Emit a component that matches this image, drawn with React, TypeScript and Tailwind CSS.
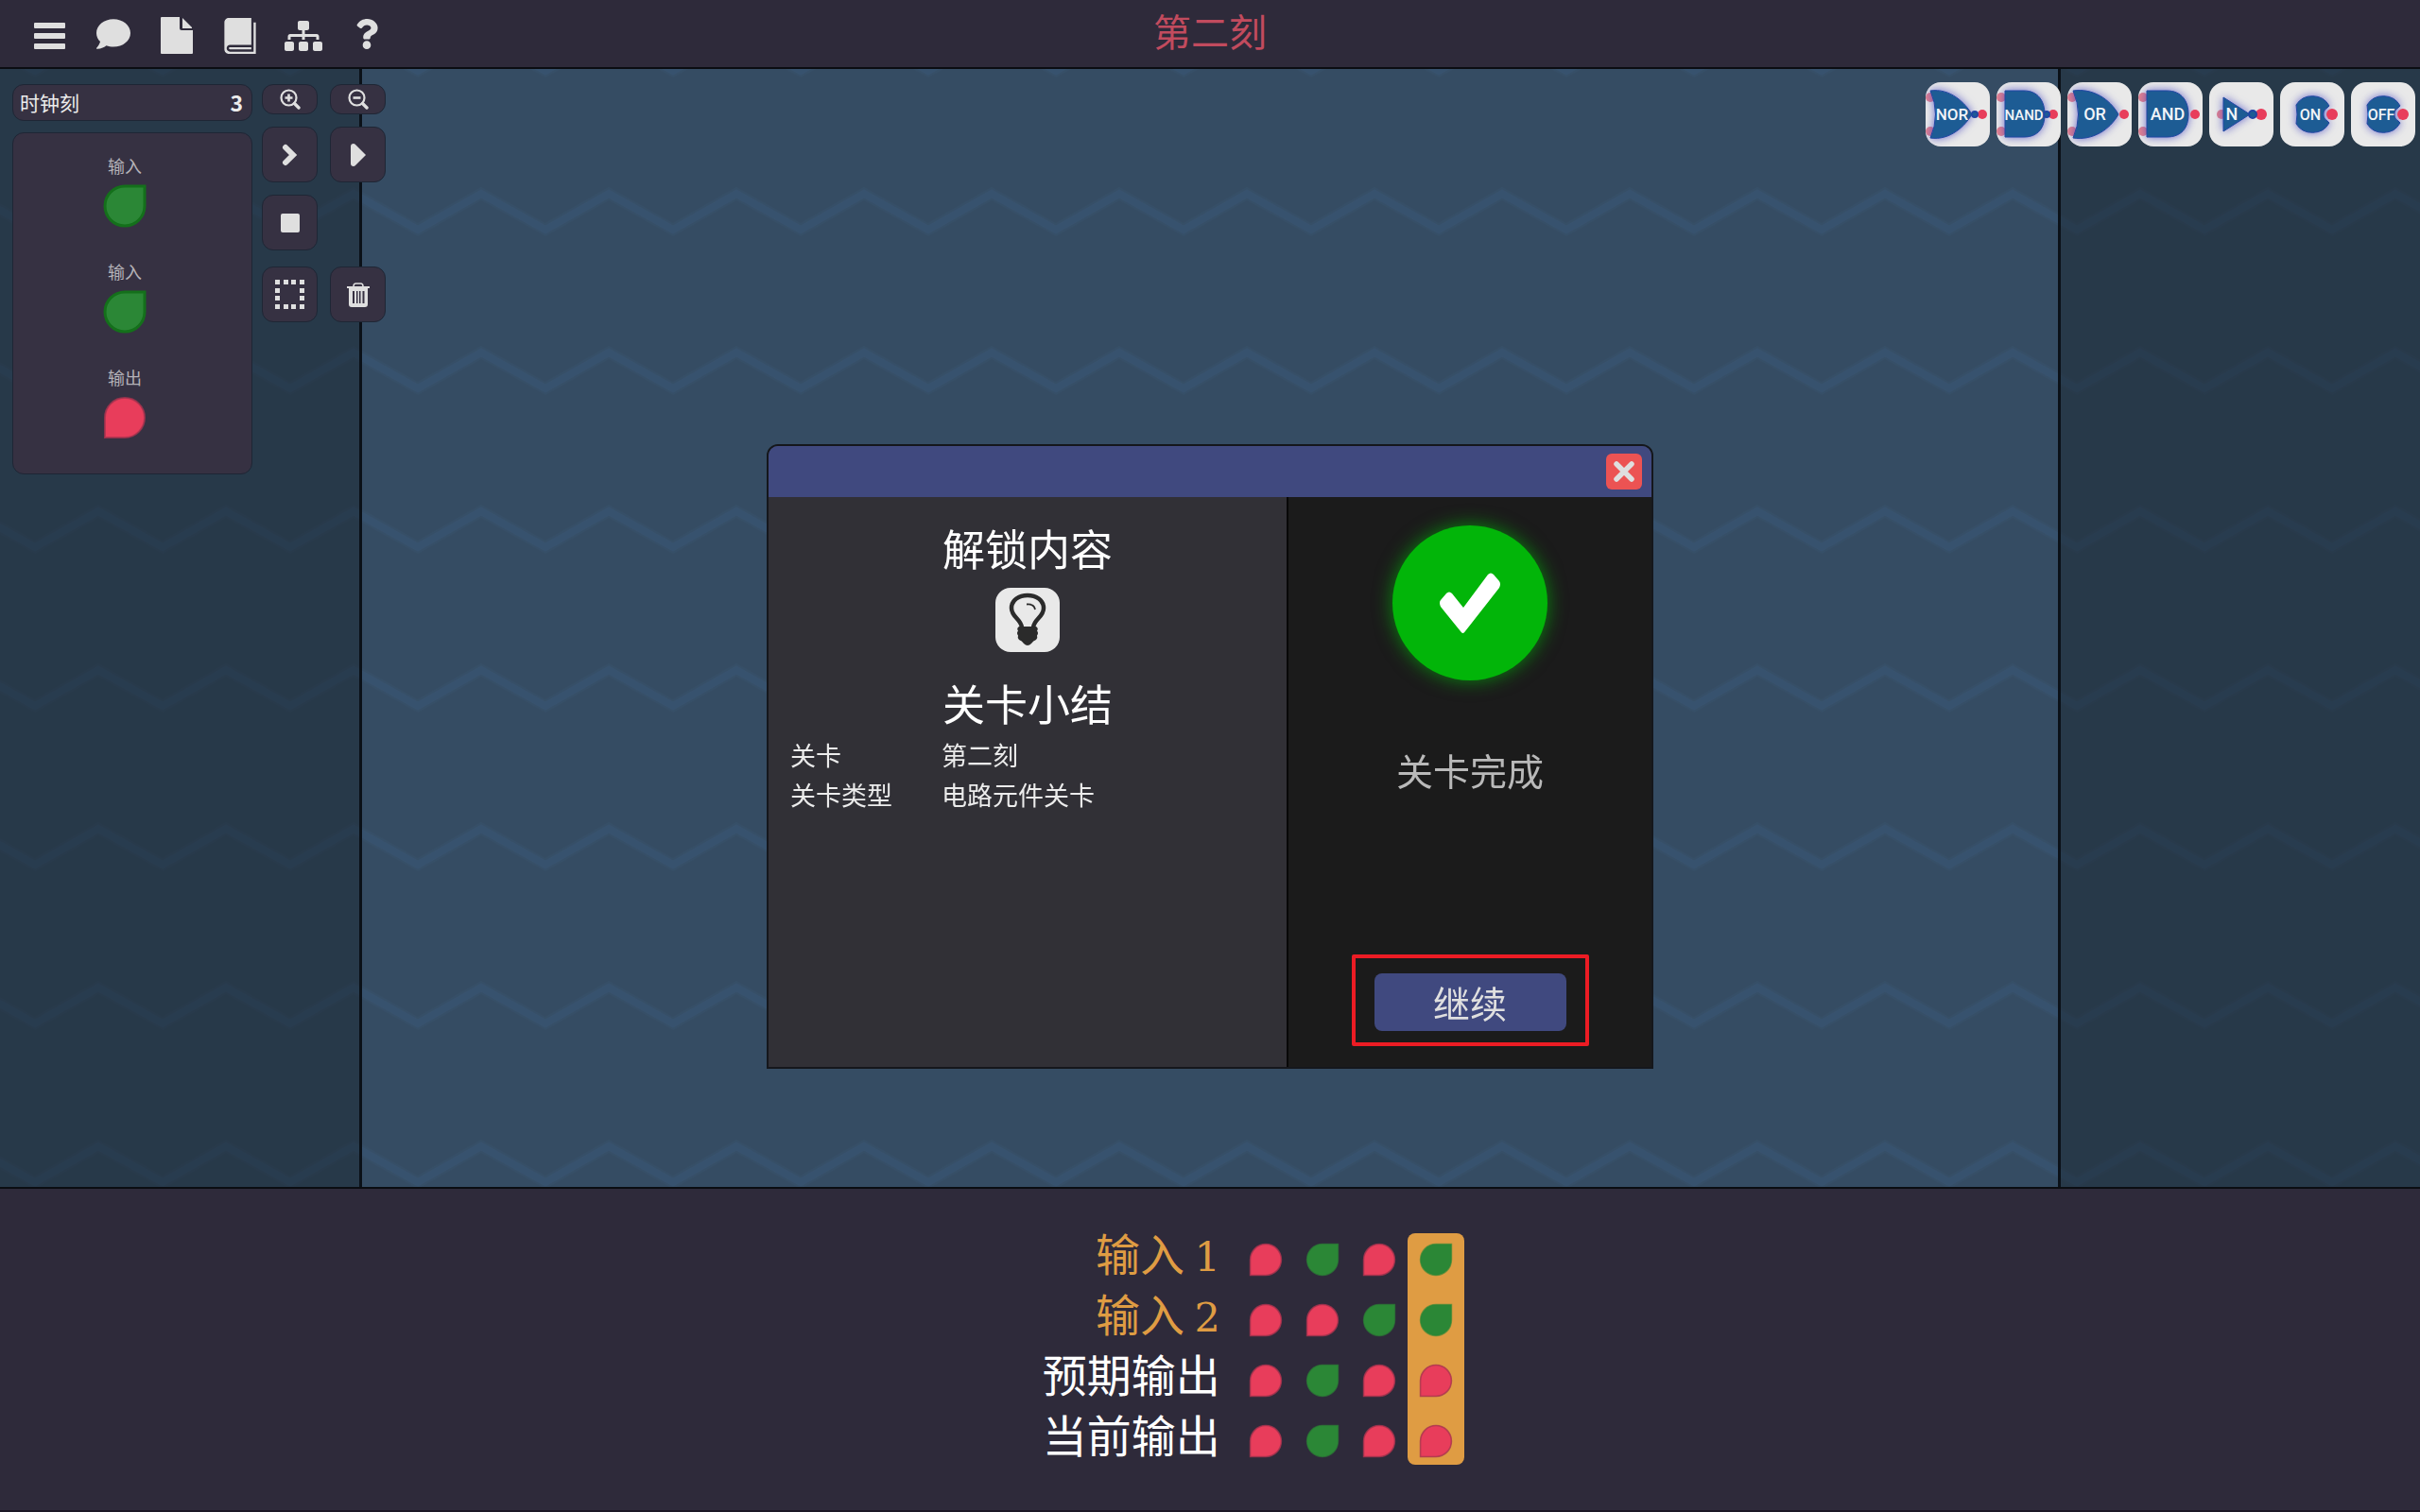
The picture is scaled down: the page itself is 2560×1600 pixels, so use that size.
import type { ReactNode } from "react";
import { FaComment, FaQuestion, FaSitemap } from "react-icons/fa";
import { ImBook } from "react-icons/im";

type Signal = "on" | "off";

const BLUE = "#1d5c94";
const EDGE = "#2146a3";
const RED = "#e83d5b";

function Drop({ signal, large = false }: { signal: Signal; large?: boolean }) {
  const size = large ? "size-[46px]" : "size-9";
  return (
    <svg viewBox="0 0 46 46" className={size} role="img" aria-label={signal}>
      {signal === "on" ? (
        <path
          d="M23 2H44V23A21 21 0 1 1 23 2Z"
          fill="#2b8736"
          stroke={large ? "#14701b" : "#2b8736"}
          strokeWidth={large ? 3 : 2}
          strokeOpacity={large ? 1 : 0.6}
        />
      ) : (
        <path
          d="M23 2A21 21 0 1 1 23 44H2V23A21 21 0 0 1 23 2Z"
          fill={RED}
          stroke="#a8334f"
          strokeWidth="2"
          strokeOpacity="0.8"
        />
      )}
    </svg>
  );
}

function NavButton({ label, children }: { label: string; children: ReactNode }) {
  return (
    <button type="button" aria-label={label} className="flex h-full w-[67px] items-center justify-center">
      {children}
    </button>
  );
}

function ToolButton({ label, short = false, children }: { label: string; short?: boolean; children: ReactNode }) {
  return (
    <button
      type="button"
      aria-label={label}
      className={
        (short ? "h-8" : "h-[59px]") +
        " flex w-[59px] items-center justify-center rounded-xl border border-[#1e2635] bg-[#363142]"
      }
    >
      {children}
    </button>
  );
}

function ZoomIcon({ plus = false }: { plus?: boolean }) {
  return (
    <svg viewBox="0 0 22 22" className="size-[22px]" fill="none" stroke="#dfdfdf">
      <circle cx="9.5" cy="9.5" r="8" strokeWidth="2.2" />
      <path d="M15.5 15.5L20 20" strokeWidth="3.4" strokeLinecap="round" />
      <path d={plus ? "M5.5 9.5H13.5M9.5 5.5V13.5" : "M5.5 9.5H13.5"} strokeWidth="2.6" />
    </svg>
  );
}

function SelectIcon() {
  const steps = [0, 9, 17, 26];
  return (
    <svg viewBox="0 0 31 31" className="size-[31px]" fill="#dfdfdf">
      {steps.flatMap((y) =>
        steps
          .filter((x) => x === 0 || x === 26 || y === 0 || y === 26)
          .map((x) => <rect key={`${x}-${y}`} x={x} y={y} width="5" height="5" />),
      )}
    </svg>
  );
}

function IoItem({ label, signal }: { label: string; signal: Signal }) {
  return (
    <div className="flex flex-col items-center gap-1.5">
      <span className="text-lg leading-7 text-[#b4b2b8]">{label}</span>
      <Drop signal={signal} large />
    </div>
  );
}

type Gate = { name: string; size: number; x: number; pins: [number, number][]; out: [number, number]; bubble?: [number, number]; d: string };

const PAIR: [number, number][] = [[5, 16], [5, 52]];
const SOURCE = "M17 24A20 19 0 0 1 52 25L50 27A8 8 0 0 0 50 41L52 43A20 19 0 0 1 17 44Q19 34 17 24Z";

const gates: Gate[] = [
  { name: "NOR", size: 17, x: 28, pins: PAIR, out: [60, 5], bubble: [52, 3], d: "M5 9C26 6 42 22 49 34C42 46 26 62 5 59Q16 34 5 9Z" },
  { name: "NAND", size: 15, x: 29, pins: PAIR, out: [60, 5], bubble: [53, 3], d: "M9 9H29C44 9 51 20 51 34C51 48 44 58 29 58H9Z" },
  { name: "OR", size: 18, x: 29, pins: PAIR, out: [60, 5], d: "M6 9C27 6 45 18 54 34C45 50 27 62 6 59Q17 34 6 9Z" },
  { name: "AND", size: 18, x: 31, pins: PAIR, out: [60, 5], d: "M9 9H30C46 9 53 20 53 34C53 48 46 58 30 58H9Z" },
  { name: "N", size: 18, x: 24, pins: [[13, 34]], out: [55, 6], bubble: [46, 4], d: "M15 16L43 34L15 52Z" },
  { name: "ON", size: 16, x: 32, pins: [], out: [55, 6], d: SOURCE },
  { name: "OFF", size: 16, x: 32, pins: [], out: [55, 6], d: SOURCE },
];

function GateButton({ gate }: { gate: Gate }) {
  return (
    <button type="button" aria-label={gate.name} className="size-[68px] overflow-hidden rounded-2xl bg-[#e9e9e9]">
      <svg viewBox="0 0 68 68" className="size-full">
        {gate.pins.map(([x, y]) => (
          <circle key={y} cx={x} cy={y} r="5" fill="#e0808f" />
        ))}
        <g className="drop-shadow-[0_0_5px_rgba(60,60,190,0.75)]">
          <path d={gate.d} fill={BLUE} stroke={EDGE} strokeWidth="1" />
        </g>
        <circle cx={gate.out[0]} cy="34" r={gate.out[1]} fill={RED} />
        {gate.bubble && (
          <circle cx={gate.bubble[0]} cy="34" r={gate.bubble[1]} fill={BLUE} stroke={EDGE} strokeWidth="2" />
        )}
        <text
          x={gate.x}
          y="40"
          textAnchor="middle"
          fontSize={gate.size}
          fill="#f1f4f8"
          className="font-['Roboto',sans-serif] font-medium"
        >
          {gate.name}
        </text>
      </svg>
    </button>
  );
}

const rows: { label: string; accent: boolean; digit?: string; cells: Signal[] }[] = [
  { label: "输入", digit: "1", accent: true, cells: ["off", "on", "off", "on"] },
  { label: "输入", digit: "2", accent: true, cells: ["off", "off", "on", "on"] },
  { label: "预期输出", accent: false, cells: ["off", "on", "off", "off"] },
  { label: "当前输出", accent: false, cells: ["off", "on", "off", "off"] },
];

function Board() {
  return (
    <div className="relative flex min-h-0 flex-1 border-b-2 border-[#0b0d12] bg-[#354c63]">
      <svg className="absolute inset-0 size-full" aria-hidden="true">
        <defs>
          <pattern id="waves" x="37" y="-52" width="135" height="168" patternUnits="userSpaceOnUse">
            <path d="M-68 16L0 54L67 16L135 54L203 16" fill="none" stroke="#38536f" strokeWidth="12" strokeOpacity="0.4" />
            <path d="M-68 16L0 54L67 16L135 54L203 16" fill="none" stroke="#38536f" strokeWidth="8" strokeOpacity="0.8" />
          </pattern>
        </defs>
        <rect width="100%" height="100%" fill="url(#waves)" />
      </svg>
      <div className="z-0 w-[383px] border-r-[3px] border-[#0b1118] bg-[#1a2530]/50" />
      <div className="flex-1" />
      <div className="z-0 w-[383px] border-l-[3px] border-[#0b1118] bg-[#1a2530]/50" />

      <div className="absolute left-[13px] top-4 flex items-start gap-2.5">
        <div className="flex w-[254px] flex-col gap-3">
          <div className="flex h-[39px] items-center justify-between rounded-xl border border-[#1e2635] bg-[#363142] px-[7px] text-[21px] text-[#ececec]">
            <span>时钟刻</span>
            <span className="pr-0.5 text-[23px] font-bold">3</span>
          </div>
          <div className="flex flex-col items-center gap-8 rounded-xl border border-[#1e2635] bg-[#363142] pb-9 pt-5 pr-4">
            <IoItem label="输入" signal="on" />
            <IoItem label="输入" signal="on" />
            <IoItem label="输出" signal="off" />
          </div>
        </div>
        <div className="flex flex-col gap-[13px]">
          <div className="flex gap-[13px]">
            <ToolButton label="放大" short><ZoomIcon plus /></ToolButton>
            <ToolButton label="缩小" short><ZoomIcon /></ToolButton>
          </div>
          <div className="flex gap-[13px]">
            <ToolButton label="单步">
              <svg viewBox="0 0 18 24" className="h-6 w-[18px]" fill="none" stroke="#dfdfdf" strokeWidth="6" strokeLinecap="round">
                <path d="M4 4L12 12L4 20" />
              </svg>
            </ToolButton>
            <ToolButton label="运行">
              <svg viewBox="0 0 18 24" className="h-6 w-[18px]" fill="#dfdfdf">
                <path d="M1 3Q1 0 4 0Q5 0 6 1L17 12L6 23Q5 24 4 24Q1 24 1 21Z" />
              </svg>
            </ToolButton>
          </div>
          <div className="flex">
            <ToolButton label="停止"><span className="size-5 rounded-xs bg-[#dfdfdf]" /></ToolButton>
          </div>
          <div className="flex gap-[13px] pt-1">
            <ToolButton label="框选"><SelectIcon /></ToolButton>
            <ToolButton label="删除">
              <svg viewBox="0 0 24 26" className="h-[26px] w-6" fill="#dfdfdf">
                <path fillRule="evenodd" d="M2 6H22V23Q22 26 19 26H5Q2 26 2 23ZM6 9V22H8V9ZM10 9V22H11.500V9ZM13 9V22H14.500V9ZM16.500 9V22H18.500V9Z" />
                <path d="M0 4H24V6H0Z" />
                <path d="M7 4Q7 1 9.500 1H14.500Q17 1 17 4" fill="none" stroke="#dfdfdf" strokeWidth="1.500" />
              </svg>
            </ToolButton>
          </div>
        </div>
      </div>

      <div className="absolute right-[5px] top-3.5 flex gap-[7px]">
        {gates.map((gate) => (
          <GateButton key={gate.name} gate={gate} />
        ))}
      </div>
    </div>
  );
}

function ResultDialog() {
  return (
    <div className="fixed inset-0 flex items-center justify-center">
      <div role="dialog" aria-label="关卡完成" className="w-[938px] overflow-hidden rounded-t-xl border-2 border-[#15171c]">
        <div className="flex h-[54px] items-center justify-end bg-[#40497f] pr-2.5">
          <button type="button" aria-label="关闭" className="flex size-[38px] items-center justify-center rounded-md bg-[#ec5353]">
            <svg viewBox="0 0 24 24" className="size-6" stroke="#dfdfdf" strokeWidth="5.500" strokeLinecap="round">
              <path d="M4 4L20 20M20 4L4 20" />
            </svg>
          </button>
        </div>
        <div className="flex min-h-[603px]">
          <div className="flex-1 bg-[#313036] px-[23px] pt-[22px] text-white">
            <h2 className="text-center text-[45px] leading-[64px]">解锁内容</h2>
            <div className="mx-auto mt-2.5 size-[68px] rounded-2xl bg-[#e9e9e9]">
              <svg viewBox="0 0 68 68" className="size-full" role="img" aria-label="提示">
                <path
                  d="M28 42C27 33 17 31 17 21.500C17 13 25 8 34 8S51 13 51 21.500C51 31 41 33 40 42"
                  fill="none"
                  stroke="#2b2b2b"
                  strokeWidth="4.500"
                />
                <path d="M25 41H43Q46 43 44 45.500Q46 48 44 50.500Q45 53 43 55Q40 56 38 59Q34 63 30 59Q28 56 25 55Q23 53 24 50.500Q22 48 24 45.500Q22 43 25 41Z" fill="#2b2b2b" />
                <path d="M33 17.500Q41 17 42 23" fill="none" stroke="#2b2b2b" strokeWidth="1.800" />
              </svg>
            </div>
            <h2 className="mt-[22px] text-center text-[45px] leading-[64px]">关卡小结</h2>
            <table className="mt-0.5 w-full text-left text-[27px] leading-[42px] text-[#ececec]">
              <tbody>
                <tr>
                  <th scope="row" className="w-40 font-normal">关卡</th>
                  <td>第二刻</td>
                </tr>
                <tr>
                  <th scope="row" className="w-40 font-normal">关卡类型</th>
                  <td>电路元件关卡</td>
                </tr>
              </tbody>
            </table>
          </div>
          <div className="flex w-[386px] flex-col items-center border-l-2 border-[#080808] bg-[#1b1b1b] pb-[38px] pt-[30px]">
            <div className="flex size-[164px] items-center justify-center rounded-full bg-[#02b509] shadow-[0_0_20px_rgba(2,181,9,0.7)]">
              <svg viewBox="0 0 64 64" className="size-16" fill="#fff" aria-hidden="true">
                <path d="M0 32Q0 30 1 29L7 22Q10 19 13 22L25 37L51 2Q54 -1 57 2L63 9Q65 12 63 16L27 62Q24.500 66 22 62L1 36Q0 34 0 32Z" />
              </svg>
            </div>
            <p className="mt-[66px] text-[39px] leading-[56px] text-[#b9b9b9]">关卡完成</p>
            <div className="relative mt-auto">
              <button type="button" className="h-[61px] w-[203px] rounded-lg bg-[#40497f] text-[39px] leading-[58px] text-[#dfdfdf]">
                继续
              </button>
              <span className="pointer-events-none absolute -inset-x-6 -bottom-4 -top-5 rounded-xs border-4 border-[#ec1c24]" />
            </div>
          </div>
        </div>
      </div>
    </div>
  );
}

function TruthTable() {
  return (
    <footer className="border-b-2 border-[#1b1825] bg-[#2e2a3a] pb-[41px] pl-[43%] pt-[43px]">
      <table className="border-collapse text-[47px] leading-10">
        <tbody>
          {rows.map((row, r) => (
            <tr key={r} className="h-16">
              <th
                scope="row"
                className={
                  (row.accent ? "text-[#df9c43]" : "text-white") +
                  " w-52 whitespace-nowrap p-0 pb-4 pr-[18px] text-right align-middle font-normal"
                }
              >
                {row.label}
                {row.digit && " "}
                {row.digit && <span className="font-['DejaVu_Serif',serif] text-[43px] leading-5">{row.digit}</span>}
              </th>
              {row.cells.map((signal, c) => (
                <td key={c} className="relative w-[60px] p-0">
                  {r === 0 && c === 3 && <span className="absolute inset-x-0 top-1 h-[245px] rounded-lg bg-[#df9c43]" />}
                  <span className="relative z-10 flex justify-center">
                    <Drop signal={signal} />
                  </span>
                </td>
              ))}
            </tr>
          ))}
        </tbody>
      </table>
    </footer>
  );
}

export default function App() {
  return (
    <div lang="zh-CN" className="flex h-screen flex-col bg-[#2e2a3a] font-['Noto_Sans_CJK_SC',sans-serif]">
      <header className="grid h-[73px] grid-cols-[1fr_auto_1fr] items-center border-b-2 border-[#0b0d12] text-[#dfdfdf]">
        <nav className="flex h-full pl-[19px]">
          <NavButton label="菜单">
            <svg viewBox="0 0 33 28" className="mt-1 h-7 w-[33px]" fill="currentColor">
              <rect y="0" width="33" height="6" rx="1" />
              <rect y="11" width="33" height="6" rx="1" />
              <rect y="22" width="33" height="6" rx="1" />
            </svg>
          </NavButton>
          <NavButton label="对话"><FaComment className="size-9" /></NavButton>
          <NavButton label="文件">
            <svg viewBox="0 0 34 39" className="mt-1 h-[39px] w-[34px]" fill="currentColor">
              <path d="M1 0H20V12Q20 14 22 14H34V38Q34 39 33 39H1Q0 39 0 38V1Q0 0 1 0Z" />
              <path d="M23 1L33 11V12H23Z" />
            </svg>
          </NavButton>
          <NavButton label="手册"><ImBook className="mt-1 size-[38px]" /></NavButton>
          <NavButton label="结构"><FaSitemap className="mt-1 h-8 w-10" /></NavButton>
          <NavButton label="帮助"><FaQuestion className="h-[34px] w-6" /></NavButton>
        </nav>
        <h1 className="pb-2 text-[40px] leading-[60px] text-[#c24b5e]">第二刻</h1>
      </header>
      <Board />
      <TruthTable />
      <ResultDialog />
    </div>
  );
}
